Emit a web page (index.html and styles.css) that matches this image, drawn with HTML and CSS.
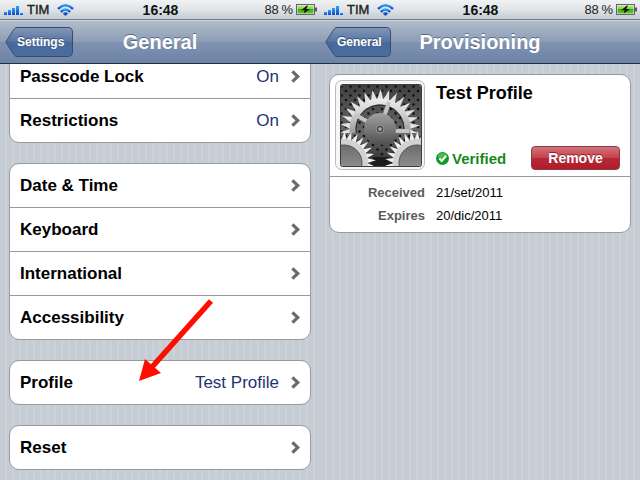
FILE: index.html
```html
<!DOCTYPE html>
<html lang="en">
<head>
  <meta charset="UTF-8" />
  <meta name="viewport" content="width=device-width, initial-scale=1.0" />
  <title>General - Provisioning</title>
  <link rel="stylesheet" href="styles.css">
</head>
<body>
  <!-- Shared icons -->
  <svg class="defs" width="0" height="0" aria-hidden="true">
    <defs>
      <linearGradient id="blue" x1="0" y1="0" x2="0" y2="1">
        <stop offset="0" stop-color="#35a0f0" />
        <stop offset="1" stop-color="#0a49d0" />
      </linearGradient>
      <linearGradient id="green" x1="0" y1="0" x2="0" y2="1">
        <stop offset="0" stop-color="#b8e888" />
        <stop offset="0.45" stop-color="#7fd23c" />
        <stop offset="0.5" stop-color="#43b010" />
        <stop offset="1" stop-color="#5cc81c" />
      </linearGradient>
      <linearGradient id="back-fill" x1="0" y1="0" x2="0" y2="1">
        <stop offset="0" stop-color="#8197b8" />
        <stop offset="0.5" stop-color="#5573a2" />
        <stop offset="0.5" stop-color="#48699b" />
        <stop offset="1" stop-color="#4a6c9f" />
      </linearGradient>
      <symbol id="signal" viewBox="0 0 19 10">
        <g fill="url(#blue)">
          <rect x="0" y="7" width="3" height="3" />
          <rect x="4" y="5" width="3" height="5" />
          <rect x="8" y="3" width="3" height="7" />
          <rect x="12" y="1" width="3" height="9" />
          <rect x="16" y="8" width="3" height="2" />
        </g>
      </symbol>
      <symbol id="wifi" viewBox="0 0 17 12">
        <g fill="none" stroke="url(#blue)" stroke-width="2.4">
          <path d="M1 4.9 Q8.5 -2.4 16 4.9" />
          <path d="M3.8 7.8 Q8.5 3.2 13.2 7.8" />
        </g>
        <path d="M5.8 9.4 Q8.5 7 11.2 9.4 L8.5 12 Z" fill="#0a4fd4" />
      </symbol>
      <symbol id="battery" viewBox="0 0 21 11">
        <rect x="0.5" y="0.5" width="18" height="10" fill="#e9f5e0" stroke="#6a5a86" />
        <rect x="1.5" y="1.5" width="16" height="8" fill="url(#green)" />
        <rect x="19" y="3.5" width="2" height="4" fill="#5d5870" />
        <path d="M11 1.6 L5.2 6.3 L8.8 6.3 L7.6 9.4 L14 4.9 L10.2 4.9 L12 1.6 Z" fill="#111" />
      </symbol>
      <symbol id="chevron" viewBox="0 0 9 13">
        <path d="M1.4 1.3 L6.8 6.5 L1.4 11.7" fill="none" stroke="#6a6a6a" stroke-width="3.2" />
      </symbol>
      <symbol id="back-tip" viewBox="0 0 12 30">
        <path d="M12 0.5 C10.5 0.5 9.5 1.5 8.8 2.6 L0.8 15 L8.8 27.4 C9.5 28.5 10.5 29.5 12 29.5" fill="url(#back-fill)" stroke="#3a4c6a" />
      </symbol>
    </defs>
  </svg>

  <section class="screen">
    <div class="status-bar">
      <div class="carrier">
        <svg class="signal"><use href="#signal" /></svg>
        <span>TIM</span>
        <svg class="wifi"><use href="#wifi" /></svg>
      </div>
      <div class="clock">16:48</div>
      <div class="power">
        <span>88&#8201;%</span>
        <svg class="battery"><use href="#battery" /></svg>
      </div>
    </div>
    <header class="nav-bar">
      <a href="#" class="back"><svg><use href="#back-tip" /></svg><span>Settings</span></a>
      <h1>General</h1>
    </header>
    <main class="list">
      <div class="group scrolled">
        <a href="#" class="row"><b>Passcode Lock</b><span>On</span><svg><use href="#chevron" /></svg></a>
        <a href="#" class="row"><b>Restrictions</b><span>On</span><svg><use href="#chevron" /></svg></a>
      </div>
      <div class="group">
        <a href="#" class="row"><b>Date &amp; Time</b><svg><use href="#chevron" /></svg></a>
        <a href="#" class="row"><b>Keyboard</b><svg><use href="#chevron" /></svg></a>
        <a href="#" class="row"><b>International</b><svg><use href="#chevron" /></svg></a>
        <a href="#" class="row"><b>Accessibility</b><svg><use href="#chevron" /></svg></a>
      </div>
      <div class="group">
        <a href="#" class="row"><b>Profile</b><span>Test Profile</span><svg><use href="#chevron" /></svg></a>
        <!-- Arrow pointing at the Profile row -->
        <svg class="arrow" viewBox="0 0 76 84">
          <path d="M72 2 L13 68" stroke="#ff0d00" stroke-width="5.6" />
          <path d="M0 82 L6 60 L22 74 Z" fill="#ff0d00" />
        </svg>
      </div>
      <div class="group">
        <a href="#" class="row"><b>Reset</b><svg><use href="#chevron" /></svg></a>
      </div>
    </main>
  </section>

  <section class="screen">
    <div class="status-bar">
      <div class="carrier">
        <svg class="signal"><use href="#signal" /></svg>
        <span>TIM</span>
        <svg class="wifi"><use href="#wifi" /></svg>
      </div>
      <div class="clock">16:48</div>
      <div class="power">
        <span>88&#8201;%</span>
        <svg class="battery"><use href="#battery" /></svg>
      </div>
    </div>
    <header class="nav-bar">
      <a href="#" class="back"><svg><use href="#back-tip" /></svg><span>General</span></a>
      <h1>Provisioning</h1>
    </header>
    <main class="detail">
      <div class="group">
        <div class="profile">
          <svg class="gears" viewBox="0 0 90 90">
            <defs>
              <linearGradient id="metal" gradientUnits="userSpaceOnUse" x1="0" y1="-40" x2="0" y2="10">
                <stop offset="0" stop-color="#ffffff" />
                <stop offset="0.5" stop-color="#cfcfcf" />
                <stop offset="1" stop-color="#8a8a8a" />
              </linearGradient>
              <linearGradient id="hub" x1="0" y1="0" x2="0" y2="1">
                <stop offset="0" stop-color="#a0a0a0" />
                <stop offset="1" stop-color="#505050" />
              </linearGradient>
              <linearGradient id="disc" x1="0" y1="0" x2="0" y2="1">
                <stop offset="0" stop-color="#6c6c6c" />
                <stop offset="1" stop-color="#a2a2a2" />
              </linearGradient>
              <linearGradient id="plate" x1="0" y1="0" x2="0" y2="1">
                <stop offset="0" stop-color="#404040" />
                <stop offset="0.6" stop-color="#686868" />
                <stop offset="1" stop-color="#2c2c2c" />
              </linearGradient>
              <pattern id="holes" width="9" height="9" patternUnits="userSpaceOnUse">
                <circle cx="2" cy="2" r="1.3" fill="#101010" />
                <circle cx="6.5" cy="6.5" r="1.3" fill="#101010" />
              </pattern>
              <clipPath id="inner"><rect x="6" y="5" width="80" height="81" rx="2" /></clipPath>
              <clipPath id="upper"><rect x="-42" y="-42" width="84" height="46" /></clipPath>
              <path id="tooth" d="M-3.2 -29 L0.8 -40 L3.2 -29 Z" />
              <g id="teeth">
                <use href="#tooth" />
                <use href="#tooth" transform="rotate(12)" />
                <use href="#tooth" transform="rotate(24)" />
                <use href="#tooth" transform="rotate(36)" />
                <use href="#tooth" transform="rotate(48)" />
              </g>
              <g id="crown">
                <use href="#teeth" />
                <use href="#teeth" transform="rotate(60)" />
                <use href="#teeth" transform="rotate(120)" />
                <use href="#teeth" transform="rotate(180)" />
                <use href="#teeth" transform="rotate(240)" />
                <use href="#teeth" transform="rotate(300)" />
              </g>
              <g id="small-gear">
                <circle r="27" fill="#222" opacity="0.5" />
                <g transform="scale(0.8)" fill="#f0f0f0"><use href="#crown" /></g>
                <circle r="24" fill="#d2d2d2" />
                <circle r="18" fill="url(#disc)" stroke="#555" />
              </g>
            </defs>
            <rect x="0.5" y="0.5" width="89" height="89" rx="6" fill="#f6f6f6" stroke="#b9bcc0" />
            <g clip-path="url(#inner)">
              <rect x="6" y="5" width="80" height="81" fill="url(#plate)" />
              <rect x="6" y="5" width="80" height="81" fill="url(#holes)" />
              <rect x="38" y="77" width="16" height="9" fill="#1c1c1c" />
              <g transform="translate(45 49)">
                <g clip-path="url(#upper)">
                  <g fill="#e2e2e2"><use href="#crown" /></g>
                  <circle r="27.5" fill="none" stroke="url(#metal)" stroke-width="6" />
                  <circle r="24" fill="none" stroke="#2a2a2a" />
                </g>
                <g stroke="#c4c4c4" stroke-width="4">
                  <path d="M0 0 L9 -27" />
                  <path d="M0 0 L-24 -14" />
                  <path d="M0 2 L29 2" />
                </g>
                <circle r="16" fill="url(#hub)" />
                <circle r="4" fill="#4a4a4a" stroke="#999" />
                <circle r="1.8" fill="#b0b0b0" />
              </g>
              <use href="#small-gear" transform="translate(9 83)" />
              <use href="#small-gear" transform="translate(82 83)" />
            </g>
            <rect x="5.5" y="4.5" width="81" height="82" rx="2" fill="none" stroke="#3c3c3c" />
          </svg>
          <div class="info">
            <h2>Test Profile</h2>
            <div class="actions">
              <svg class="check" viewBox="0 0 13 13">
                <circle cx="6.5" cy="6.5" r="6.5" fill="#12982a" />
                <ellipse cx="6.5" cy="4" rx="4.5" ry="3" fill="#4cba4c" />
                <path d="M3.3 6.5 L5.8 9 L10 3.9" fill="none" stroke="#fff" stroke-width="2" />
              </svg>
              <span class="verified">Verified</span>
              <button type="button">Remove</button>
            </div>
          </div>
        </div>
        <dl class="dates">
          <dt>Received</dt><dd>21/set/2011</dd>
          <dt>Expires</dt><dd>20/dic/2011</dd>
        </dl>
      </div>
    </main>
  </section>
</body>
</html>
```
FILE: styles.css
```css
* { box-sizing: border-box; }

body {
  margin: 0;
  min-height: 100vh;
  display: flex;
  font-family: "Liberation Sans", Arial, Helvetica, sans-serif;
  color: #000;
}

a { color: inherit; text-decoration: none; }
svg { display: block; flex: none; }
.defs { position: absolute; }

.screen {
  flex: 1;
  min-width: 0;
  display: flex;
  flex-direction: column;
  background: repeating-linear-gradient(to right, #c5ccd4 0, #c5ccd4 5px, #cbd2d8 5px, #cbd2d8 7px);
}

/* Status bar */
.status-bar {
  display: grid;
  grid-template-columns: 1fr auto 1fr;
  align-items: center;
  height: 20px;
  padding: 0 3px 0 4px;
  background: linear-gradient(#f0f3f4, #dfe4e6 50%, #c3cbd0);
  border-bottom: 1px solid #747b86;
  font-size: 13px;
  color: #222;
}

.carrier, .power {
  display: flex;
  align-items: center;
}
.carrier span { margin: 0 8px 0 4px; -webkit-text-stroke: 0.4px #222; }
.power { justify-content: flex-end; gap: 3px; }
.clock { font-size: 14px; font-weight: bold; color: #111; }
.signal { width: 19px; height: 10px; }
.wifi { width: 17px; height: 12px; }
.battery { width: 21px; height: 11px; }

/* Navigation bar */
.nav-bar {
  display: grid;
  grid-template-columns: 1fr auto 1fr;
  align-items: center;
  height: 44px;
  padding: 0 5px;
  background: linear-gradient(#b2bccb, #8c9cb6 50%, #8092b0 50%, #6d84a5);
  border-top: 1px solid #cdd5df;
  border-bottom: 1px solid #222f45;
}

.nav-bar h1 {
  margin: 0;
  font-size: 20px;
  line-height: 24px;
  color: #fff;
  text-shadow: 0 -1px 0 #5c6c86;
}

.back {
  display: flex;
  justify-self: start;
  font-size: 12px;
  font-weight: bold;
  color: #fff;
  text-shadow: 0 -1px 0 #3a4c6c;
}
.back svg { width: 12px; height: 30px; }
.back span {
  height: 30px;
  line-height: 28px;
  padding-right: 8px;
  background: linear-gradient(#8197b8, #5573a2 50%, #48699b 50%, #4a6c9f);
  border: 1px solid #3a4c6a;
  border-left: none;
  border-radius: 0 5px 5px 0;
}

/* Grouped lists */
.list {
  flex: 1;
  display: flex;
  flex-direction: column;
  gap: 20px;
  padding: 0 9px 10px;
  overflow: hidden;
}

.group {
  position: relative;
  background: #fff;
  border: 1px solid #979a9f;
  border-radius: 10px;
}
/* first group is partly hidden behind the nav bar */
.group.scrolled { margin-top: -10px; }

.row {
  display: flex;
  align-items: center;
  height: 43px;
  padding: 0 10px;
  font-size: 17px;
}
.row + .row {
  height: 44px;
  border-top: 1px solid #979a9f;
}
.row b { flex: 1; }
.row span { color: #1e3470; }
.row svg { width: 9px; height: 13px; margin-left: 12px; }

.arrow {
  position: absolute;
  left: 129px;
  top: -62px;
  width: 76px;
  height: 84px;
}

/* Profile card */
.detail { flex: 1; padding: 10px 9px; }

.profile {
  display: flex;
  gap: 11px;
  padding: 5px 10px 6px 5px;
  border-bottom: 1px solid #979a9f;
}
.gears { width: 90px; height: 90px; }

.info {
  flex: 1;
  display: flex;
  flex-direction: column;
  justify-content: space-between;
}
.info h2 {
  margin: 3px 0 0;
  font-size: 18px;
  line-height: 20px;
}

.actions { display: flex; align-items: center; }
.check { width: 13px; height: 13px; margin-right: 3px; }
.verified {
  flex: 1;
  font-size: 15px;
  font-weight: bold;
  color: #168a1c;
}

button {
  width: 89px;
  height: 24px;
  padding: 0;
  font: bold 14px "Liberation Sans", Arial, sans-serif;
  color: #fff;
  text-shadow: 0 -1px 0 #7c2a30;
  background: linear-gradient(#d4747b, #c4404b 50%, #b92634 50%, #b01c2c);
  border: 1px solid #8f3a42;
  border-radius: 4px;
  cursor: pointer;
}

.dates {
  display: grid;
  grid-template-columns: 95px 1fr;
  column-gap: 11px;
  margin: 0;
  padding: 4px 0 5px;
  font-size: 13px;
  line-height: 23px;
}
.dates dt {
  text-align: right;
  font-weight: bold;
  color: #5b5b5b;
}
.dates dd { margin: 0; }
```
